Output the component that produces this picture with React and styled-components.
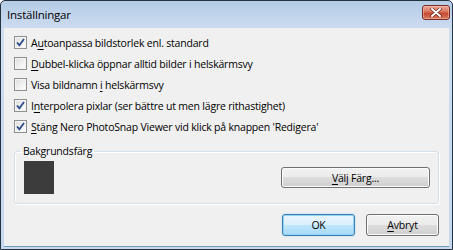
import React, { useState } from 'react'
import styled, { createGlobalStyle } from 'styled-components'

const GlobalStyle = createGlobalStyle`
  html, body {
    margin: 0;
    padding: 0;
    width: 453px;
    height: 250px;
    overflow: hidden;
    background: #ffffff;
  }
  body {
    font-family: "Open Sans", "Noto Sans", "Liberation Sans", sans-serif;
    font-size: 10.5px;
    letter-spacing: -0.2px;
    color: #000000;
  }
`

const Window = styled.div`
  box-sizing: border-box;
  width: 453px;
  height: 250px;
  display: flex;
  flex-direction: column;
  border: 1px solid #25323f;
  border-radius: 5px 5px 0 0;
  background: linear-gradient(#b4cbe6, #cfdef1 30px, #c6d8ee);
`

const TitleBar = styled.div`
  height: 27px;
  display: flex;
  align-items: center;
  justify-content: space-between;
  padding: 0 2px 0 6px;
  flex-shrink: 0;
`

const Title = styled.span`
  font-size: 11.5px;
  color: #000000;
  margin-top: -1px;
`

const CloseButton = styled.div`
  box-sizing: border-box;
  width: 28px;
  height: 15px;
  align-self: flex-start;
  margin-top: 4px;
  border: 1px solid #7a2b24;
  border-radius: 3px;
  background: linear-gradient(#eaa898, #d9755f 45%, #c4472e 55%, #d87a60);
  display: flex;
  align-items: center;
  justify-content: center;
  box-shadow: inset 0 0 0 1px rgba(255, 210, 200, 0.45);
`

const Client = styled.div`
  flex: 1;
  margin: 0 3px 2px 3px;
  background: #f0f0f0;
  border-bottom: 1px solid #6c9db8;
  display: flex;
  flex-direction: column;
  padding: 4px 10px 10px 10px;
`

const CheckList = styled.div`
  display: flex;
  flex-direction: column;
`

const Row = styled.label`
  height: 21px;
  display: flex;
  align-items: center;
  gap: 3px;
  cursor: default;
  white-space: nowrap;
`

const Box = styled.span`
  box-sizing: border-box;
  width: 13px;
  height: 13px;
  border: 1px solid #8e8f8f;
  background: linear-gradient(135deg, #dcdcdc, #f6f6f6 70%, #ffffff);
  box-shadow: inset 0 0 0 1px #f4f4f4;
  display: flex;
  align-items: center;
  justify-content: center;
  flex-shrink: 0;
  margin-right: 1px;
`

const Key = styled.span`
  text-decoration: underline;
  text-underline-offset: 2px;
`

const Group = styled.fieldset`
  margin: 6px 0 0 0;
  padding: 2px 8px 9px 9px;
  border: 1px solid #d5dfe5;
  border-radius: 3px;
  box-shadow: inset 1px 1px 0 #ffffff, 1px 1px 0 #ffffff;
  display: flex;
  align-items: center;
  justify-content: space-between;
  min-inline-size: 0;
`

const Legend = styled.legend`
  padding: 0 3px;
  margin-left: -4px;
  line-height: 16px;
`

const Swatch = styled.div`
  width: 30px;
  height: 33px;
  background: ${props => props.color};
`

const Button = styled.button`
  box-sizing: border-box;
  width: ${props => props.width}px;
  height: ${props => props.height}px;
  font-family: inherit;
  font-size: 10.5px;
  letter-spacing: -0.2px;
  color: #000000;
  padding: 0;
  border-radius: 3px;
  border: 1px solid ${props => (props.primary ? '#3c7fb1' : '#707070')};
  background: ${props =>
    props.primary
      ? 'linear-gradient(#eaf6fd, #d9f0fc 50%, #bee6fd 50%, #a7d9f5)'
      : 'linear-gradient(#f2f2f2, #ebebeb 50%, #dddddd 50%, #cfcfcf)'};
  box-shadow: ${props =>
    props.primary ? 'inset 0 0 0 1px #98d1ef, 0 0 2px #9fd5f3' : 'inset 0 0 0 1px #fcfcfc'};
`

const ButtonRow = styled.div`
  margin-top: auto;
  display: flex;
  justify-content: flex-end;
  gap: 11px;
`

const options = [
  { pre: 'A', key: 'u', post: 'toanpassa bildstorlek enl. standard', checked: true },
  { pre: '', key: 'D', post: 'ubbel-klicka öppnar alltid bilder i helskärmsvy', checked: false },
  { pre: 'Visa bildnamn ', key: 'i', post: ' helskärmsvy', checked: false },
  { pre: 'I', key: 'n', post: 'terpolera pixlar (ser bättre ut men lägre rithastighet)', checked: true },
  { pre: '', key: 'S', post: "täng Nero PhotoSnap Viewer vid klick på knappen 'Redigera'", checked: true },
]

function Check({ checked }) {
  return (
    <Box>
      {checked && (
        <svg width="9" height="9" viewBox="0 0 9 9">
          <path d="M1 4.5 L3.4 7.2 L8 1" fill="none" stroke="#2f4c8c" strokeWidth="1.8" />
        </svg>
      )}
    </Box>
  )
}

export default function App() {
  const [values, setValues] = useState(options.map(o => o.checked))

  function toggle(i) {
    setValues(v => v.map((x, j) => (j === i ? !x : x)))
  }

  return (
    <>
      <GlobalStyle />
      <Window>
        <TitleBar>
          <Title>Inställningar</Title>
          <CloseButton>
            <svg width="12" height="9" viewBox="0 0 12 9">
              <path d="M2 1 L10 8 M10 1 L2 8" stroke="#5a1a12" strokeWidth="3.2" strokeLinecap="round" />
              <path d="M2 1 L10 8 M10 1 L2 8" stroke="#ffffff" strokeWidth="2" strokeLinecap="round" />
            </svg>
          </CloseButton>
        </TitleBar>
        <Client>
          <CheckList>
            {options.map((o, i) => (
              <Row key={i} onClick={() => toggle(i)}>
                <Check checked={values[i]} />
                <span>
                  {o.pre}
                  <Key>{o.key}</Key>
                  {o.post}
                </span>
              </Row>
            ))}
          </CheckList>
          <Group>
            <Legend>Bakgrundsfärg</Legend>
            <Swatch color="#3c3c3c" />
            <Button width={149} height={21}>
              <Key>V</Key>älj Färg...
            </Button>
          </Group>
          <ButtonRow>
            <Button primary width={73} height={22}>OK</Button>
            <Button width={73} height={22}>
              <Key>A</Key>vbryt
            </Button>
          </ButtonRow>
        </Client>
      </Window>
    </>
  )
}
